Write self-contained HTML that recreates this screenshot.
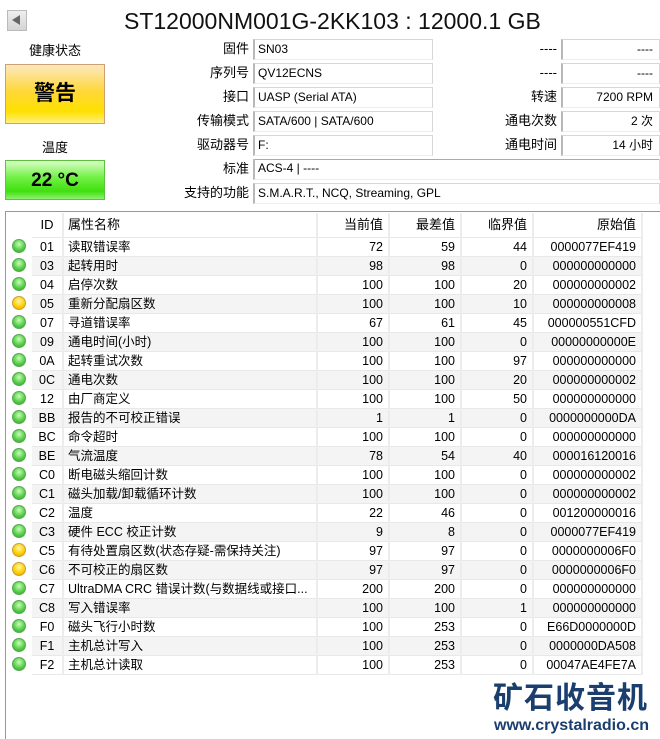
<!DOCTYPE html>
<html><head><meta charset="utf-8">
<style>
*{margin:0;padding:0;box-sizing:border-box}
body{width:660px;height:739px;background:#fff;position:relative;overflow:hidden;font-family:"Liberation Sans","Noto Sans CJK SC",sans-serif;font-size:12px;color:#000}
.a{position:absolute}
.lbl{position:absolute;text-align:right;font-size:13px;line-height:20px}
.box{position:absolute;height:21px;border:1px solid #d6d6d6;border-left:2px solid #b8b8b8;border-bottom:1px solid #eee;font-size:12px;line-height:19px;padding:0 3px;white-space:nowrap;overflow:hidden}
.r{text-align:right}
table{position:absolute;left:6px;top:213px;border-collapse:collapse;table-layout:fixed;font-size:12.5px}
td{height:19px;line-height:18px;border-bottom:1px solid #e8e8e8;border-right:2px solid #ececec;white-space:nowrap;overflow:hidden;padding:0 4px}
tr.h td{height:24px;line-height:22px;font-size:13px}
tr:nth-child(odd):not(.h) td:not(:first-child){background:#f4f4f4}
td:first-child{border:none;padding:0;text-align:center}
td.n{text-align:right;padding-right:5px}
td.id{text-align:center}
.d{display:inline-block;width:14px;height:14px;border-radius:50%;vertical-align:middle;margin-top:-2px}
.g{background:radial-gradient(circle at 50% 35%,#c8ffb8 0,#5ad04a 55%,#2e9e2a 100%);border:1px solid #5aa858}
.y{background:radial-gradient(circle at 50% 35%,#fff6b0 0,#ffd000 55%,#d8a000 100%);border:1px solid #c8a040}
</style></head><body>
<div class="a" style="left:7px;top:10px;width:20px;height:21px;background:linear-gradient(#eee,#d4d4d4);border:1px solid #bbb"></div>
<div class="a" style="left:12px;top:15px;width:0;height:0;border-top:5px solid transparent;border-bottom:5px solid transparent;border-right:8px solid #666"></div>
<div class="a" style="left:124px;top:6px;font-size:23px;line-height:30px;color:#111">ST12000NM001G-2KK103 : 12000.1 GB</div>

<div class="a" style="left:5px;top:40px;width:100px;text-align:center;font-size:13px">健康状态</div>
<div class="a" style="left:5px;top:64px;width:100px;height:60px;border:1px solid #d0a070;background:linear-gradient(#fde8c0 0,#ffd83a 45%,#ffe000 80%,#fff080 100%);text-align:center;line-height:58px;font-size:21px;font-weight:bold">警告</div>
<div class="a" style="left:5px;top:137px;width:100px;text-align:center;font-size:13px">温度</div>
<div class="a" style="left:5px;top:160px;width:100px;height:40px;border:1px solid #60c040;background:linear-gradient(#d8ffc8 0,#6ef040 45%,#40e010 80%,#90f070 100%);text-align:center;line-height:40px;font-size:19px;font-weight:bold">22 °C</div>

<div class="lbl" style="left:150px;width:99px;top:39px">固件</div>
<div class="lbl" style="left:150px;width:99px;top:63px">序列号</div>
<div class="lbl" style="left:150px;width:99px;top:87px">接口</div>
<div class="lbl" style="left:150px;width:99px;top:111px">传输模式</div>
<div class="lbl" style="left:150px;width:99px;top:135px">驱动器号</div>
<div class="lbl" style="left:150px;width:99px;top:159px">标准</div>
<div class="lbl" style="left:150px;width:99px;top:183px">支持的功能</div>
<div class="box" style="left:253px;top:39px;width:180px">SN03</div>
<div class="box" style="left:253px;top:63px;width:180px">QV12ECNS</div>
<div class="box" style="left:253px;top:87px;width:180px">UASP (Serial ATA)</div>
<div class="box" style="left:253px;top:111px;width:180px">SATA/600 | SATA/600</div>
<div class="box" style="left:253px;top:135px;width:180px">F:</div>
<div class="a" style="left:253px;top:159px;width:407px;height:1px;background:#aaa"></div>
<div class="box" style="left:253px;top:159px;width:407px;border-top:none">ACS-4 | ----</div>
<div class="box" style="left:253px;top:183px;width:407px">S.M.A.R.T., NCQ, Streaming, GPL</div>

<div class="lbl" style="left:460px;width:97px;top:39px">----</div>
<div class="lbl" style="left:460px;width:97px;top:63px">----</div>
<div class="lbl" style="left:460px;width:97px;top:87px">转速</div>
<div class="lbl" style="left:460px;width:97px;top:111px">通电次数</div>
<div class="lbl" style="left:460px;width:97px;top:135px">通电时间</div>
<div class="box r" style="left:561px;top:39px;width:99px;padding-right:6px">----</div>
<div class="box r" style="left:561px;top:63px;width:99px;padding-right:6px">----</div>
<div class="box r" style="left:561px;top:87px;width:99px;padding-right:6px">7200 RPM</div>
<div class="box r" style="left:561px;top:111px;width:99px;padding-right:6px">2 次</div>
<div class="box r" style="left:561px;top:135px;width:99px;padding-right:6px">14 小时</div>

<div class="a" style="left:5px;top:211px;width:655px;height:1px;background:#999"></div>
<div class="a" style="left:5px;top:211px;width:1px;height:528px;background:#999"></div>

<table>
<colgroup><col style="width:26px"><col style="width:31px"><col style="width:254px"><col style="width:72px"><col style="width:72px"><col style="width:72px"><col style="width:109px"></colgroup>
<tr class="h"><td></td><td class="id">ID</td><td>属性名称</td><td class="n">当前值</td><td class="n">最差值</td><td class="n">临界值</td><td class="n">原始值</td></tr>
<tr><td><span class="d g"></span></td><td class="id">01</td><td>读取错误率</td><td class="n">72</td><td class="n">59</td><td class="n">44</td><td class="n">0000077EF419</td></tr>
<tr><td><span class="d g"></span></td><td class="id">03</td><td>起转用时</td><td class="n">98</td><td class="n">98</td><td class="n">0</td><td class="n">000000000000</td></tr>
<tr><td><span class="d g"></span></td><td class="id">04</td><td>启停次数</td><td class="n">100</td><td class="n">100</td><td class="n">20</td><td class="n">000000000002</td></tr>
<tr><td><span class="d y"></span></td><td class="id">05</td><td>重新分配扇区数</td><td class="n">100</td><td class="n">100</td><td class="n">10</td><td class="n">000000000008</td></tr>
<tr><td><span class="d g"></span></td><td class="id">07</td><td>寻道错误率</td><td class="n">67</td><td class="n">61</td><td class="n">45</td><td class="n">000000551CFD</td></tr>
<tr><td><span class="d g"></span></td><td class="id">09</td><td>通电时间(小时)</td><td class="n">100</td><td class="n">100</td><td class="n">0</td><td class="n">00000000000E</td></tr>
<tr><td><span class="d g"></span></td><td class="id">0A</td><td>起转重试次数</td><td class="n">100</td><td class="n">100</td><td class="n">97</td><td class="n">000000000000</td></tr>
<tr><td><span class="d g"></span></td><td class="id">0C</td><td>通电次数</td><td class="n">100</td><td class="n">100</td><td class="n">20</td><td class="n">000000000002</td></tr>
<tr><td><span class="d g"></span></td><td class="id">12</td><td>由厂商定义</td><td class="n">100</td><td class="n">100</td><td class="n">50</td><td class="n">000000000000</td></tr>
<tr><td><span class="d g"></span></td><td class="id">BB</td><td>报告的不可校正错误</td><td class="n">1</td><td class="n">1</td><td class="n">0</td><td class="n">0000000000DA</td></tr>
<tr><td><span class="d g"></span></td><td class="id">BC</td><td>命令超时</td><td class="n">100</td><td class="n">100</td><td class="n">0</td><td class="n">000000000000</td></tr>
<tr><td><span class="d g"></span></td><td class="id">BE</td><td>气流温度</td><td class="n">78</td><td class="n">54</td><td class="n">40</td><td class="n">000016120016</td></tr>
<tr><td><span class="d g"></span></td><td class="id">C0</td><td>断电磁头缩回计数</td><td class="n">100</td><td class="n">100</td><td class="n">0</td><td class="n">000000000002</td></tr>
<tr><td><span class="d g"></span></td><td class="id">C1</td><td>磁头加载/卸载循环计数</td><td class="n">100</td><td class="n">100</td><td class="n">0</td><td class="n">000000000002</td></tr>
<tr><td><span class="d g"></span></td><td class="id">C2</td><td>温度</td><td class="n">22</td><td class="n">46</td><td class="n">0</td><td class="n">001200000016</td></tr>
<tr><td><span class="d g"></span></td><td class="id">C3</td><td>硬件 ECC 校正计数</td><td class="n">9</td><td class="n">8</td><td class="n">0</td><td class="n">0000077EF419</td></tr>
<tr><td><span class="d y"></span></td><td class="id">C5</td><td>有待处置扇区数(状态存疑-需保持关注)</td><td class="n">97</td><td class="n">97</td><td class="n">0</td><td class="n">0000000006F0</td></tr>
<tr><td><span class="d y"></span></td><td class="id">C6</td><td>不可校正的扇区数</td><td class="n">97</td><td class="n">97</td><td class="n">0</td><td class="n">0000000006F0</td></tr>
<tr><td><span class="d g"></span></td><td class="id">C7</td><td>UltraDMA CRC 错误计数(与数据线或接口...</td><td class="n">200</td><td class="n">200</td><td class="n">0</td><td class="n">000000000000</td></tr>
<tr><td><span class="d g"></span></td><td class="id">C8</td><td>写入错误率</td><td class="n">100</td><td class="n">100</td><td class="n">1</td><td class="n">000000000000</td></tr>
<tr><td><span class="d g"></span></td><td class="id">F0</td><td>磁头飞行小时数</td><td class="n">100</td><td class="n">253</td><td class="n">0</td><td class="n">E66D0000000D</td></tr>
<tr><td><span class="d g"></span></td><td class="id">F1</td><td>主机总计写入</td><td class="n">100</td><td class="n">253</td><td class="n">0</td><td class="n">0000000DA508</td></tr>
<tr><td><span class="d g"></span></td><td class="id">F2</td><td>主机总计读取</td><td class="n">100</td><td class="n">253</td><td class="n">0</td><td class="n">00047AE4FE7A</td></tr>
</table>

<div class="a" style="left:493px;top:678px;font-size:30px;line-height:34px;font-weight:bold;color:#1a3f6e;letter-spacing:1px;font-family:'Noto Sans CJK SC',sans-serif">矿石收音机</div>
<div class="a" style="left:494px;top:716px;font-size:16px;line-height:20px;font-weight:bold;color:#1a3f6e">www.crystalradio.cn</div>
</body></html>
